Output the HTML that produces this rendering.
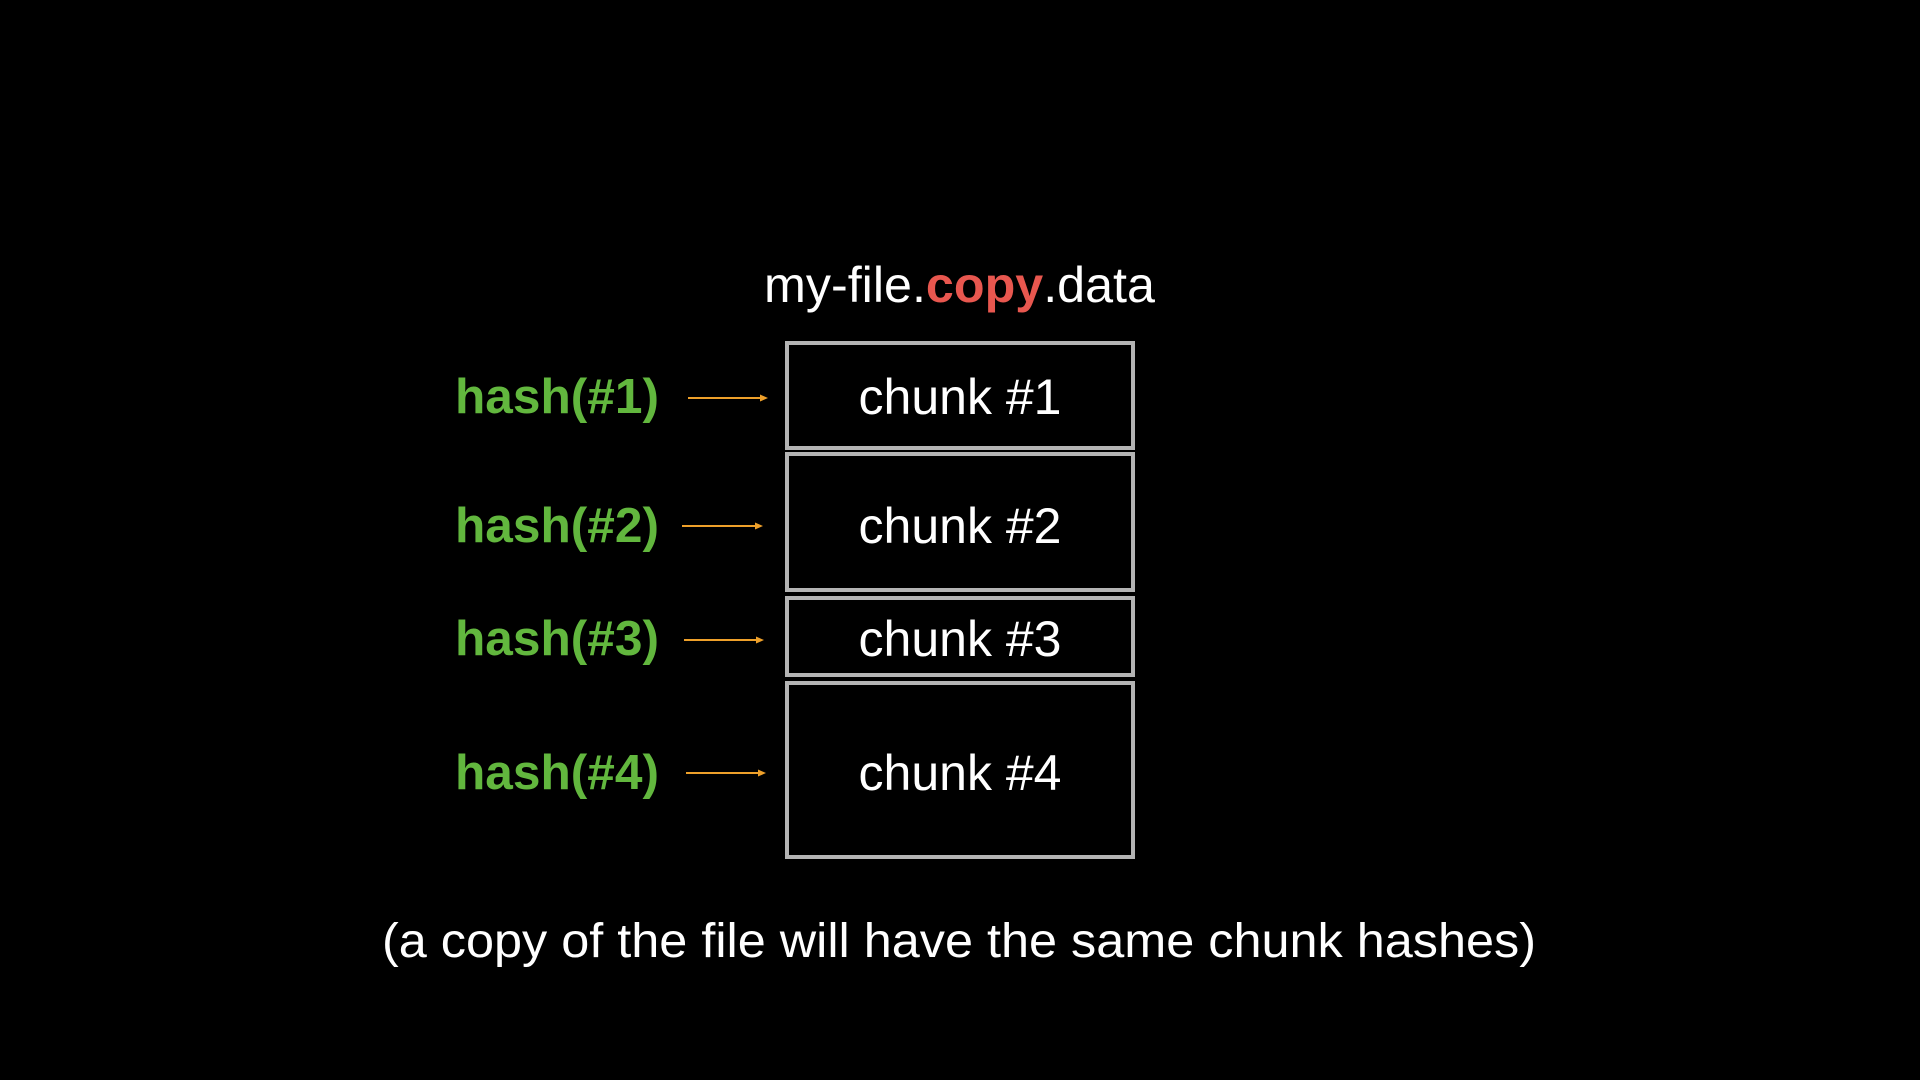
<!DOCTYPE html>
<html><head><meta charset="utf-8"><style>
html,body{margin:0;padding:0;background:#000;width:1920px;height:1080px;overflow:hidden}
svg{display:block}
text{font-family:"Liberation Sans",Arial,sans-serif}
</style></head><body>
<svg width="1920" height="1080" viewBox="0 0 1920 1080" xmlns="http://www.w3.org/2000/svg">
<rect width="1920" height="1080" fill="#000"/>
<text x="764" y="302" font-size="50" fill="#fff" textLength="391" lengthAdjust="spacingAndGlyphs">my-file.<tspan fill="#e8574f" font-weight="bold">copy</tspan>.data</text>
<g fill="none" stroke="#b4b4b4" stroke-width="4">
<rect x="787" y="343" width="346" height="105"/>
<rect x="787" y="454" width="346" height="136"/>
<rect x="787" y="598" width="346" height="77"/>
<rect x="787" y="683" width="346" height="174"/>
</g>
<g font-size="50" fill="#fff" text-anchor="middle">
<text x="960" y="414">chunk #1</text>
<text x="960" y="543">chunk #2</text>
<text x="960" y="656">chunk #3</text>
<text x="960" y="790">chunk #4</text>
</g>
<g font-size="49" font-weight="bold" fill="#62b73e">
<text x="455" y="413" textLength="204" lengthAdjust="spacingAndGlyphs">hash(#1)</text>
<text x="455" y="542" textLength="204" lengthAdjust="spacingAndGlyphs">hash(#2)</text>
<text x="455" y="655" textLength="204" lengthAdjust="spacingAndGlyphs">hash(#3)</text>
<text x="455" y="789" textLength="204" lengthAdjust="spacingAndGlyphs">hash(#4)</text>
</g>
<g stroke="#eea02a" stroke-width="2" fill="#eea02a">
<line x1="688" y1="398" x2="762" y2="398"/><path d="M768 398 L760 394.5 L760 401.5Z" stroke="none"/>
<line x1="682" y1="526" x2="757" y2="526"/><path d="M763 526 L755 522.5 L755 529.5Z" stroke="none"/>
<line x1="684" y1="640" x2="758" y2="640"/><path d="M764 640 L756 636.5 L756 643.5Z" stroke="none"/>
<line x1="686" y1="773" x2="760" y2="773"/><path d="M766 773 L758 769.5 L758 776.5Z" stroke="none"/>
</g>
<text x="382" y="957" font-size="48" fill="#fff" textLength="1154" lengthAdjust="spacingAndGlyphs">(a copy of the file will have the same chunk hashes)</text>
</svg>
</body></html>
